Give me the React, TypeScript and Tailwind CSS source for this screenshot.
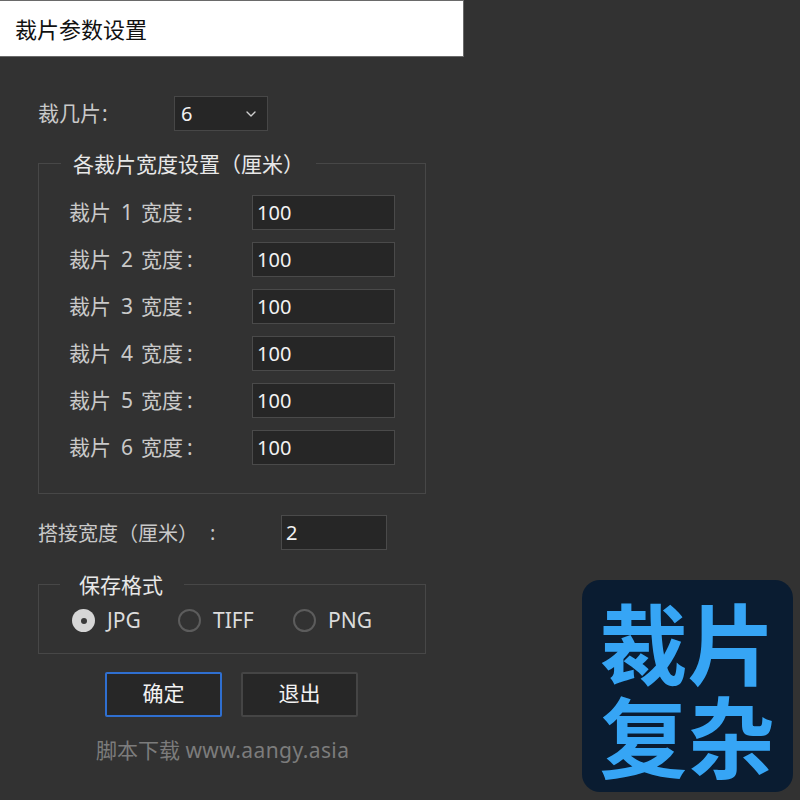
import React from "react";
import { ChevronDown } from "lucide-react";

const font = { fontFamily: '"Noto Sans", "Noto Sans CJK SC", sans-serif' };
const cjk = { fontFamily: '"Noto Sans CJK SC", sans-serif' };

function Field({ value, w }: { value: string; w: string }) {
  return (
    <div
      className={`${w} h-[35px] bg-[#262626] border border-[#4a4a4a] flex items-center pl-[4px] text-[20px] text-[#f2f2f2]`}
    >
      {value}
    </div>
  );
}

function Radio({ label, checked }: { label: string; checked?: boolean }) {
  return (
    <div className="flex items-center gap-[12px]">
      {checked ? (
        <div className="w-[23px] h-[23px] rounded-full bg-[#d6d6d6] flex items-center justify-center">
          <div className="w-[6px] h-[6px] rounded-full bg-[#3a3a3a]" />
        </div>
      ) : (
        <div className="w-[23px] h-[23px] rounded-full border-2 border-[#5c5c5c]" />
      )}
      <span className="text-[21px] text-[#dcdcdc]">{label}</span>
    </div>
  );
}

export default function App() {
  const rows = [1, 2, 3, 4, 5, 6];
  return (
    <div className="relative w-[800px] h-[800px] bg-[#323232] overflow-hidden" style={font}>
      <div
        className="w-[464px] h-[57px] bg-white border-t border-r border-b border-[#6a6a6a] flex items-center pl-[15px] text-[22px] text-[#111]"
        style={cjk}
      >
        裁片参数设置
      </div>

      <div className="pl-[38px] w-[464px]">
        <div className="flex items-center mt-[39px] h-[35px]">
          <span className="w-[136px] text-[21px] text-[#c9c9c9]">
            裁几片<span className="ml-[1px]">:</span>
          </span>
          <div className="w-[94px] h-[35px] bg-[#262626] border border-[#474747] flex items-center justify-between pl-[6px] pr-[8px] text-[20px] text-[#f2f2f2]">
            <span>6</span>
            <ChevronDown size={16} strokeWidth={2} className="text-[#cfcfcf]" />
          </div>
        </div>

        <fieldset className="mt-[18px] w-[388px] border border-[#474747] pl-[30px] pb-[28px] pt-[18px]">
          <legend
            className="-ml-[8px] px-[12px] text-[21px] leading-[28px] text-[#e8e8e8]"
            style={cjk}
          >
            各裁片宽度设置（厘米）
          </legend>
          <div className="flex flex-col gap-[12px]">
            {rows.map((n) => (
              <div key={n} className="flex items-center h-[35px]">
                <div className="w-[183px] flex items-center text-[21px] text-[#c9c9c9]">
                  <span>裁片</span>
                  <span className="ml-[10px] mr-[8px]">{n}</span>
                  <span>宽度</span>
                  <span className="ml-[4px]">:</span>
                </div>
                <Field value="100" w="w-[143px]" />
              </div>
            ))}
          </div>
        </fieldset>

        <div className="flex items-center mt-[21px] h-[35px]">
          <div className="w-[243px] flex items-center text-[20px] text-[#c9c9c9]">
            <span style={cjk}>搭接宽度（厘米）</span>
            <span className="ml-[12px]">:</span>
          </div>
          <Field value="2" w="w-[106px]" />
        </div>

        <fieldset className="mt-[20px] w-[388px] border border-[#474747] pl-[33px] pb-[16px] pt-[7px]">
          <legend
            className="-ml-[12px] pl-[19px] pr-[21px] text-[21px] leading-[28px] text-[#e8e8e8]"
            style={cjk}
          >
            保存格式
          </legend>
          <div className="flex items-center">
            <div className="w-[106px]">
              <Radio label="JPG" checked />
            </div>
            <div className="w-[115px]">
              <Radio label="TIFF" />
            </div>
            <Radio label="PNG" />
          </div>
        </fieldset>

        <div className="flex gap-[19px] mt-[18px] pl-[67px]">
          <button className="w-[117px] h-[45px] bg-[#272727] border-2 border-[#2f6fd0] rounded-[2px] text-[21px] text-[#f2f2f2]">
            确定
          </button>
          <button className="w-[117px] h-[45px] bg-[#272727] border-2 border-[#454545] rounded-[2px] text-[21px] text-[#f2f2f2]">
            退出
          </button>
        </div>

        <div className="mt-[18px] pl-[58px] text-[21px] text-[#7c7c7c]">
          脚本下载 <span className="tracking-[0.4px]">www.aangy.asia</span>
        </div>
      </div>

      <div className="absolute left-[582px] top-[580px] w-[211px] h-[212px] rounded-[18px] bg-[#0a1c31] flex items-center justify-center">
        <div className="text-[88px] leading-[93px] font-bold text-[#36a5f5] text-center" style={cjk}>
          裁片
          <br />
          复杂
        </div>
      </div>
    </div>
  );
}
